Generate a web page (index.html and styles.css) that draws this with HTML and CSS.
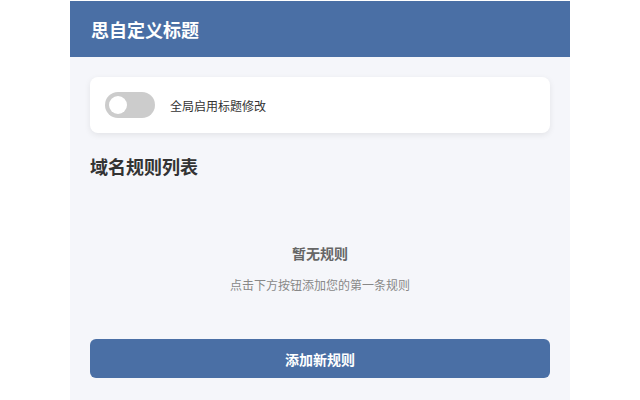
FILE: index.html
```html
<!DOCTYPE html>
<html lang="zh-CN">
  <head>
    <meta charset="utf-8">
    <title>思自定义标题</title>
    <link rel="stylesheet" href="styles.css">
  </head>
  <body>
    <div class="app">
        <div class="header">
            <h1>思自定义标题</h1>
        </div>
        <div class="content">
            <div class="card">
                <label class="switch">
                    <input type="checkbox" id="global-toggle">
                    <span class="slider"></span>
                </label>
                <span class="switch-label">全局启用标题修改</span>
            </div>
            <h2 class="section-title">域名规则列表</h2>
            <div class="empty">
                <p class="empty-title">暂无规则</p>
                <p class="empty-text">点击下方按钮添加您的第一条规则</p>
            </div>
            <button id="add-btn">添加新规则</button>
        </div>
    </div>
  </body>
</html>
```

FILE: styles.css
```css
*{
    margin: 0;
    padding: 0;
    box-sizing: border-box;
}
body{
    background: #fff;
    font-family: "Noto Sans CJK SC", "Noto Sans", sans-serif;
    color: #333;
}
.app{
    width: 500px;
    margin: 1px auto 0;
    background: #f5f6fa;
    min-height: 399px;
}
.header{
    height: 56px;
    background: #4a6fa5;
    display: flex;
    align-items: center;
    padding: 0 21px;
}
.header h1{
    color: #fff;
    font-size: 18px;
    font-weight: bold;
}
.content{
    padding: 20px 20px;
}
.card{
    background: #fff;
    border-radius: 8px;
    box-shadow: 0 2px 6px rgba(0, 0, 0, 0.08);
    padding: 15px 15px;
    display: flex;
    align-items: center;
    gap: 15px;
}
.switch{
    position: relative;
    width: 50px;
    height: 26px;
    display: inline-block;
}
.switch input{
    display: none;
}
.slider{
    position: absolute;
    inset: 0;
    background: #ccc;
    border-radius: 13px;
}
.slider::before{
    content: "";
    position: absolute;
    left: 4px;
    top: 4px;
    width: 18px;
    height: 18px;
    border-radius: 50%;
    background: #fff;
}
.switch-label{
    font-size: 12px;
    color: #333;
}
.section-title{
    font-size: 18px;
    line-height: 26px;
    font-weight: bold;
    color: #333;
    margin-top: 20px;
}
.empty{
    text-align: center;
    padding: 64px 0 46px;
}
.empty-title{
    font-size: 14px;
    font-weight: bold;
    color: #666;
}
.empty-text{
    font-size: 12px;
    color: #888;
    margin-top: 13px;
}
#add-btn{
    width: 100%;
    height: 39px;
    border: none;
    border-radius: 6px;
    background: #4a6fa5;
    color: #fff;
    font-family: inherit;
    font-size: 14px;
    font-weight: bold;
}
```
